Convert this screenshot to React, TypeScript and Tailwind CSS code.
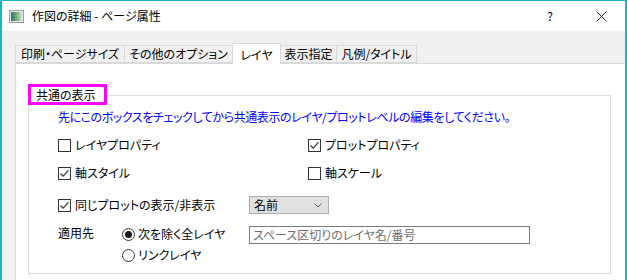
import React from "react";

function Check({ checked }: { checked?: boolean }) {
  return (
    <span className="w-[13px] h-[13px] border border-[#333333] bg-white flex items-center justify-center shrink-0">
      {checked && (
        <svg width="11" height="11" viewBox="0 0 11 11">
          <path d="M1.5 5.5 L4.2 8.2 L9.5 2.2" stroke="#333333" fill="none" strokeWidth="1.2" />
        </svg>
      )}
    </span>
  );
}

function Radio({ checked }: { checked?: boolean }) {
  return (
    <span className="w-[13px] h-[13px] rounded-full border border-[#333333] bg-white flex items-center justify-center shrink-0">
      {checked && <span className="w-[7px] h-[7px] rounded-full bg-[#1a1a1a]" />}
    </span>
  );
}

function Tab({ label, w, active }: { label: string; w: string; active?: boolean }) {
  return (
    <div
      className={
        active
          ? `${w} h-[21px] bg-white border border-b-0 border-[#d9d9d9] flex items-center justify-center relative z-10 -mb-px`
          : `${w} h-[18px] mt-[2px] bg-[#f0f0f0] border border-[#d9d9d9] -ml-px flex items-center justify-center`
      }
    >
      <span className={active ? "pt-[1px]" : ""}>{label}</span>
    </div>
  );
}

export default function App() {
  return (
    <div className="w-[627px] h-[280px] overflow-hidden bg-[#f0f0f0] border-t border-l-2 border-r-2 border-[#1ab5c9] flex flex-col text-[12px] text-black font-['Noto_Sans_CJK_JP',sans-serif] font-normal [font-feature-settings:'palt'] leading-none">
      {/* Title bar */}
      <div className="h-[30px] bg-white flex items-center shrink-0">
        <svg className="ml-[7px]" width="15" height="13" viewBox="0 0 15 13">
          <defs>
            <linearGradient id="g" x1="0" x2="1" y1="0" y2="0">
              <stop offset="0" stopColor="#2f6f6a" />
              <stop offset="0.5" stopColor="#6fb36f" />
              <stop offset="1" stopColor="#d8dde4" />
            </linearGradient>
          </defs>
          <rect x="0.5" y="0.5" width="14" height="12" fill="#e9e9e9" stroke="#9a9a9a" />
          <rect x="2" y="2" width="11" height="9" fill="url(#g)" />
        </svg>
        <span className="ml-[8px]">作図の詳細 - ページ属性</span>
        <span className="ml-auto mr-[43px] text-[12px]">?</span>
        <svg className="mr-[18px]" width="11" height="11" viewBox="0 0 11 11">
          <path d="M0.5 0.5 L10.5 10.5 M10.5 0.5 L0.5 10.5" stroke="#222" strokeWidth="1" />
        </svg>
      </div>

      {/* Body */}
      <div className="flex-1 flex flex-col pl-[13px]">
        {/* Tabs */}
        <div className="flex items-start mt-[12px] pl-[1px] h-[20px]">
          <Tab label="印刷・ページサイズ" w="w-[110px]" />
          <Tab label="その他のオプション" w="w-[109px]" />
          <div className="-ml-px">
            <Tab label="レイヤ" w="w-[49px]" active />
          </div>
          <Tab label="表示指定" w="w-[57px]" />
          <Tab label="凡例/タイトル" w="w-[81px]" />
        </div>

        {/* Panel */}
        <div className="flex-1 bg-white border-t border-l border-[#d9d9d9] pl-[12px] pt-[31px]">
          <div className="relative w-[583px] h-[179px] border border-[#dcdcdc]">
            <div className="absolute left-[-1px] top-[-12px] w-[79px] h-[21px] border-[3px] border-[#ff00ff] bg-white flex items-center pl-[5px]">
              共通の表示
            </div>
            <div className="pl-[29px] pt-[14px] flex flex-col">
              <div className="h-[14px] flex items-center text-[#0000ff] tracking-[-0.4px]">
                先にこのボックスをチェックしてから共通表示のレイヤ/プロットレベルの編集をしてください。
              </div>
              <div className="h-[16px] mt-[13px] flex items-center">
                <div className="w-[250px] flex items-center gap-[4px]">
                  <Check />
                  <span>レイヤプロパティ</span>
                </div>
                <div className="flex items-center gap-[4px]">
                  <Check checked />
                  <span>プロットプロパティ</span>
                </div>
              </div>
              <div className="h-[16px] mt-[12px] flex items-center">
                <div className="w-[250px] flex items-center gap-[4px]">
                  <Check checked />
                  <span>軸スタイル</span>
                </div>
                <div className="flex items-center gap-[4px]">
                  <Check />
                  <span>軸スケール</span>
                </div>
              </div>
              <div className="h-[18px] mt-[15px] flex items-center">
                <div className="w-[191px] flex items-center gap-[4px]">
                  <Check checked />
                  <span>同じプロットの表示/非表示</span>
                </div>
                <div className="w-[80px] h-[18px] bg-[#e1e1e1] border border-[#adadad] flex items-center pl-[4px] pr-[6px]">
                  <span>名前</span>
                  <svg className="ml-auto" width="8" height="5" viewBox="0 0 8 5">
                    <path d="M0.5 0.5 L4 4 L7.5 0.5" stroke="#555" fill="none" strokeWidth="1" />
                  </svg>
                </div>
              </div>
              <div className="flex mt-[12px]">
                <div className="w-[64px] pt-[1px]">適用先</div>
                <div className="w-[127px] flex flex-col">
                  <div className="h-[16px] flex items-center gap-[3px]">
                    <Radio checked />
                    <span>次を除く全レイヤ</span>
                  </div>
                  <div className="h-[16px] mt-[5px] flex items-center gap-[3px]">
                    <Radio />
                    <span>リンクレイヤ</span>
                  </div>
                </div>
                <div className="w-[281px] h-[18px] border border-[#7a7a7a] bg-white flex items-center pl-[3px] text-[#6d6d6d]">
                  スペース区切りのレイヤ名/番号
                </div>
              </div>
            </div>
          </div>
        </div>
      </div>
    </div>
  );
}
